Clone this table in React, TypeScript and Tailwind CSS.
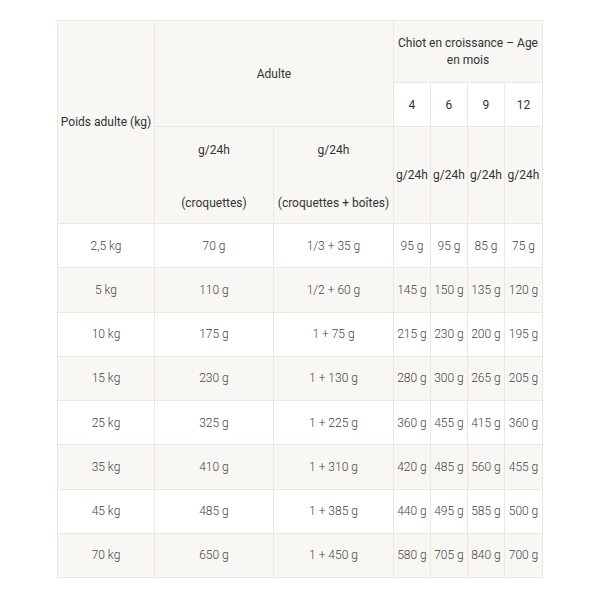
const rows = [
  ['2,5 kg', '70 g', '1/3 + 35 g', '95 g', '95 g', '85 g', '75 g'],
  ['5 kg', '110 g', '1/2 + 60 g', '145 g', '150 g', '135 g', '120 g'],
  ['10 kg', '175 g', '1 + 75 g', '215 g', '230 g', '200 g', '195 g'],
  ['15 kg', '230 g', '1 + 130 g', '280 g', '300 g', '265 g', '205 g'],
  ['25 kg', '325 g', '1 + 225 g', '360 g', '455 g', '415 g', '360 g'],
  ['35 kg', '410 g', '1 + 310 g', '420 g', '485 g', '560 g', '455 g'],
  ['45 kg', '485 g', '1 + 385 g', '440 g', '495 g', '585 g', '500 g'],
  ['70 kg', '650 g', '1 + 450 g', '580 g', '705 g', '840 g', '700 g'],
];

const cell = 'border border-[#ebe8e1] text-center align-middle p-0';

export default function App() {
  return (
    <div className="min-h-[600px] w-[600px] bg-white pt-5 font-['Roboto',sans-serif] text-[12px]">
      <table className="mx-auto w-[485px] table-fixed border-collapse">
        <colgroup>
          <col className="w-[97px]" />
          <col className="w-[119px]" />
          <col className="w-[120px]" />
          <col className="w-[37px]" />
          <col className="w-[37px]" />
          <col className="w-[37px]" />
          <col className="w-[38px]" />
        </colgroup>
        <thead className="text-[#333]">
          <tr className="h-[62px]">
            <th rowSpan={3} className={`${cell} bg-[#f8f7f3] font-normal`}>
              Poids adulte (kg)
            </th>
            <th rowSpan={2} colSpan={2} className={`${cell} bg-[#f8f7f3] font-normal`}>
              Adulte
            </th>
            <th colSpan={4} className={`${cell} bg-[#f8f7f3] px-1 font-normal leading-[17px]`}>
              Chiot en croissance – Age en mois
            </th>
          </tr>
          <tr className="h-[44px]">
            {['4', '6', '9', '12'].map((m) => (
              <th key={m} className={`${cell} bg-white font-normal`}>
                {m}
              </th>
            ))}
          </tr>
          <tr className="h-[97px]">
            <th className={`${cell} bg-[#f8f7f3] font-normal`}>
              <div className="flex flex-col items-center gap-[35px] pt-[3px]">
                <span>g/24h</span>
                <span>(croquettes)</span>
              </div>
            </th>
            <th className={`${cell} bg-[#f8f7f3] font-normal`}>
              <div className="flex flex-col items-center gap-[35px] pt-[3px]">
                <span>g/24h</span>
                <span>(croquettes + boîtes)</span>
              </div>
            </th>
            {[0, 1, 2, 3].map((i) => (
              <th key={i} className={`${cell} bg-[#f8f7f3] font-normal`}>
                g/24h
              </th>
            ))}
          </tr>
        </thead>
        <tbody className="font-light text-[#444]">
          {rows.map((r, i) => (
            <tr key={r[0]} className={`h-[44.25px] ${i % 2 === 0 ? 'bg-white' : 'bg-[#f8f7f3]'}`}>
              {r.map((v, j) => (
                <td key={j} className={`${cell} whitespace-nowrap`}>
                  {v}
                </td>
              ))}
            </tr>
          ))}
        </tbody>
      </table>
    </div>
  );
}
